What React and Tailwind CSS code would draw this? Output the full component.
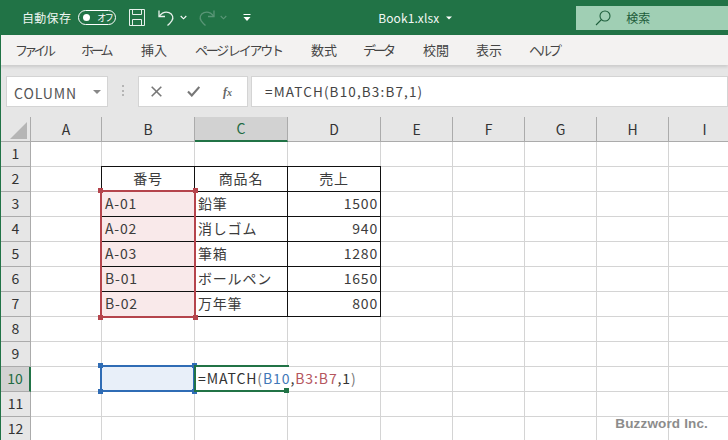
import React from "react";

const font = { fontFamily: '"Noto Sans CJK JP","Noto Sans",sans-serif' };
const cols = ["A", "B", "C", "D", "E", "F", "G", "H", "I"];
const rows = [1, 2, 3, 4, 5, 6, 7, 8, 9, 10, 11, 12];
const tabs = [
  ["ファイル", "w-[66px] tracking-[-3.7px]"],
  ["ホーム", "w-[60px] tracking-[-3px]"],
  ["挿入", "w-[54px]"],
  ["ページ レイアウト", "w-[116px] tracking-[-2.2px]"],
  ["数式", "w-[52px]"],
  ["データ", "w-[60px] tracking-[-3px]"],
  ["校閲", "w-[53px]"],
  ["表示", "w-[53px]"],
  ["ヘルプ", "w-[60px] tracking-[-3px]"],
];
const data = {
  "B2": ["番号", "c"], "C2": ["商品名", "c"], "D2": ["売上", "c"],
  "B3": ["A-01", "l"], "C3": ["鉛筆", "l"], "D3": ["1500", "r"],
  "B4": ["A-02", "l"], "C4": ["消しゴム", "l"], "D4": ["940", "r"],
  "B5": ["A-03", "l"], "C5": ["筆箱", "l"], "D5": ["1280", "r"],
  "B6": ["B-01", "l"], "C6": ["ボールペン", "l"], "D6": ["1650", "r"],
  "B7": ["B-02", "l"], "C7": ["万年筆", "l"], "D7": ["800", "r"],
};
const align = { c: "justify-center", l: "justify-start pl-[3px]", r: "justify-end pr-[2px]" };

function Handle({ className }) {
  return <span className={`absolute h-[5px] w-[5px] ${className}`} />;
}

function Cell({ col, row }) {
  const key = col + row;
  const d = data[key];
  const inTable = d !== undefined;
  const isRange = col === "B" && row >= 3 && row <= 7;
  const isActive = col === "B" && row === 10;
  return (
    <div
      className={`flex items-center overflow-visible whitespace-nowrap border-b border-r pb-[2px] text-[14px] tracking-[0.8px] text-[#3c3c3c] ${
        inTable ? "border-[#111111]" : "border-[#d4d4d4]"
      } ${isRange ? "bg-[#f9e9ea]" : isActive ? "bg-[#e8eff9]" : "bg-white"} ${inTable ? align[d[1]] : ""}`}
    >
      {inTable ? d[0] : null}
    </div>
  );
}

export default function App() {
  return (
    <div style={font} className="relative flex h-[440px] w-[728px] flex-col overflow-hidden bg-[#e6e6e6]">
      {/* title bar */}
      <div className="flex h-[35px] shrink-0 items-center bg-[#217346] text-white">
        <span className="ml-[22px] text-[12px] tracking-[0.3px] text-[#eef5f1]">自動保存</span>
        <div className="ml-[7px] flex h-[15px] w-[38px] items-center rounded-full border border-white pl-[4px]">
          <span className="h-[7px] w-[7px] shrink-0 rounded-full bg-white" />
          <span className="ml-[7px] whitespace-nowrap text-[9px] leading-none tracking-[-1.5px]">オフ</span>
        </div>
        <svg className="ml-[13px]" width="16" height="17" viewBox="0 0 16 17" fill="none" stroke="#e8f1ec" strokeWidth="1">
          <path d="M.5.5h15v16H.5z" />
          <path d="M3.5.5v5h9v-5M3.5 16.5v-6h9v6" />
        </svg>
        <svg className="ml-[13px]" width="17" height="17" viewBox="0 0 17 17" fill="none" stroke="#e8f1ec" strokeWidth="1.3">
          <path d="M1 1.5v6h6" />
          <path d="M1.2 7.3C4 3.6 8 2.6 11 3.6c3.6 1.3 5 5.3 2.8 8.2-1 1.4-2.4 3-4.3 4.7" />
        </svg>
        <svg className="ml-[5px]" width="7" height="5" viewBox="0 0 7 5" fill="none" stroke="#ffffff" strokeWidth="1.1">
          <path d="M.7 1 3.5 3.8 6.3 1" />
        </svg>
        <svg className="ml-[11px]" width="17" height="17" viewBox="0 0 17 17" fill="none" stroke="#5a9677" strokeWidth="1.3">
          <path d="M16 1.5v6h-6" />
          <path d="M15.8 7.3C13 3.6 9 2.6 6 3.6c-3.6 1.3-5 5.3-2.8 8.2 1 1.4 2.4 3 4.3 4.7" />
        </svg>
        <svg className="ml-[5px]" width="7" height="5" viewBox="0 0 7 5" fill="none" stroke="#5a9677" strokeWidth="1.1">
          <path d="M.7 1 3.5 3.8 6.3 1" />
        </svg>
        <svg className="ml-[16px]" width="8" height="8" viewBox="0 0 8 8" fill="#ffffff">
          <path d="M.5 0h7v1h-7zM.5 3h7L4 7z" />
        </svg>
        <span className="ml-[127px] text-[12px] tracking-[0.1px] text-[#f2f7f4]">Book1.xlsx</span>
        <svg className="ml-[7px]" width="6" height="4" viewBox="0 0 6 4" fill="#ffffff">
          <path d="M0 .5h6L3 3.5z" />
        </svg>
        <div className="ml-[124px] mt-[1px] flex h-[24px] flex-1 items-center bg-[#a0cfb4] text-[#1d5c3a]">
          <svg className="ml-[19px]" width="16" height="16" viewBox="0 0 16 16" fill="none" stroke="#1f5f3d" strokeWidth="1.1">
            <circle cx="10" cy="6" r="5" />
            <path d="M6.5 9.5 1 15" />
          </svg>
          <span className="ml-[15px] text-[12px]">検索</span>
        </div>
      </div>

      {/* ribbon tabs */}
      <div className="flex h-[30px] shrink-0 items-center border-l border-[#217346] bg-[#f3f2f1] pb-[1px] pl-[14px] text-[13px] text-[#444444] shadow-[0_2px_3px_rgba(0,0,0,0.12)]">
        {tabs.map(([t, c]) => (
          <span key={t} className={`shrink-0 whitespace-nowrap ${c}`}>{t}</span>
        ))}
      </div>

      {/* formula bar */}
      <div className="flex h-[52px] shrink-0 items-start border-l border-[#217346] pt-[11px]">
        <div className="ml-[5px] flex h-[31px] w-[102px] items-center justify-between border border-[#d4d4d4] bg-white pl-[7px] pr-[6px] pt-[3px] text-[14px] tracking-[0.9px] text-[#555555]">
          <span>COLUMN</span>
          <svg className="mb-[3px]" width="8" height="4" viewBox="0 0 8 4" fill="#888888"><path d="M0 0h8L4 4z" /></svg>
        </div>
        <div className="ml-[14px] mt-[9px] flex h-[11px] w-[2px] flex-col justify-between">
          <span className="h-[2px] w-[2px] bg-[#b5b5b5]" />
          <span className="h-[2px] w-[2px] bg-[#b5b5b5]" />
          <span className="h-[2px] w-[2px] bg-[#b5b5b5]" />
        </div>
        <div className="ml-[14px] flex h-[31px] w-[110px] items-center border border-[#d4d4d4] bg-white">
          <svg className="ml-[12px]" width="11" height="11" viewBox="0 0 11 11" fill="none" stroke="#777777" strokeWidth="1.6">
            <path d="M.7.7l9.6 9.6M10.3.7.7 10.3" />
          </svg>
          <svg className="ml-[25px]" width="13" height="11" viewBox="0 0 13 11" fill="none" stroke="#777777" strokeWidth="2.1">
            <path d="M1 5.5 4.8 9.5 12.3 1" />
          </svg>
          <span className="ml-[23px] text-[12px] italic leading-none text-[#666666]" style={{ fontFamily: '"Liberation Serif",serif' }}>
            <b>f</b><span className="text-[10px]"><b>x</b></span>
          </span>
        </div>
        <div className="ml-[3px] flex h-[31px] flex-1 items-center border border-[#d4d4d4] bg-white pl-[13px] pb-[1px] text-[13.5px] tracking-[1.15px] text-[#444444]">
          =MATCH(B10,B3:B7,1)
        </div>
      </div>

      {/* sheet */}
      <div className="relative grid flex-1 border-l border-[#217346] grid-cols-[30px_71px_93px_93px_93px_72px_72px_72px_72px_72px] grid-rows-[25px_repeat(12,25px)]">
        {/* corner */}
        <div className="relative border-b border-r border-[#ababab] bg-[#e6e6e6]">
          <svg className="absolute bottom-[2px] right-[3px]" width="17" height="17" viewBox="0 0 17 17" fill="#b5b5b5"><path d="M17 0v17H0z" /></svg>
        </div>
        {cols.map((c) => (
          <div
            key={c}
            className={`flex items-center justify-center text-[14px] ${
              c === "C"
                ? "border-b-2 border-r border-b-[#217346] border-r-[#ababab] bg-[#d2d2d2] text-[#1e6b43]"
                : "border-b border-r border-[#ababab] text-[#333333]"
            }`}
          >
            {c}
          </div>
        ))}
        {rows.map((r) => (
          <React.Fragment key={r}>
            <div
              className={`flex items-center justify-center pb-[1px] text-[14px] ${
                r === 10
                  ? "border-r-2 border-b border-r-[#217346] border-b-[#ababab] bg-[#d2d2d2] text-[#1e6b43]"
                  : "border-b border-r border-[#ababab] text-[#333333]"
              }`}
            >
              {r}
            </div>
            {cols.map((c) => (
              <Cell key={c} col={c} row={r} />
            ))}
          </React.Fragment>
        ))}

        {/* table top / left borders */}
        <div className="absolute left-[100px] top-[49px] h-[26px] w-[280px] border-l border-t border-[#111111]" />

        {/* red range highlight */}
        <div className="absolute left-[99px] top-[73px] h-[128px] w-[96px] border-2 border-[#b5444c]">
          <Handle className="left-[-4px] top-[-4px] bg-[#b5444c]" />
          <Handle className="right-[-4px] top-[-4px] bg-[#b5444c]" />
          <Handle className="bottom-[-4px] left-[-4px] bg-[#b5444c]" />
          <Handle className="bottom-[-4px] right-[-4px] bg-[#b5444c]" />
        </div>

        {/* blue reference */}
        <div className="absolute left-[99px] top-[248px] h-[27px] w-[95px] border-2 border-[#2f6cb5]">
          <Handle className="left-[-4px] top-[-4px] bg-[#2f6cb5]" />
          <Handle className="right-[-4px] top-[-4px] bg-[#2f6cb5]" />
          <Handle className="bottom-[-4px] left-[-4px] bg-[#2f6cb5]" />
          <Handle className="bottom-[-4px] right-[-4px] bg-[#2f6cb5]" />
        </div>

        {/* active editing cell */}
        <div className="absolute left-[193px] top-[248px] flex h-[27px] w-[95px] items-center border-2 border-r-0 border-[#217346] bg-white pl-[2px] text-[14px] tracking-[0.9px] text-[#333333]">
          <span className="whitespace-nowrap bg-white pr-[2px]">
            =MATCH<span className="text-[#777777]">(</span><span className="text-[#3f78b8]">B10</span>,<span className="text-[#b5555d]">B3:B7</span>,1<span className="text-[#777777]">)</span>
          </span>
          <span className="absolute bottom-[-3px] right-[0px] h-[5px] w-[5px] bg-[#217346]" />
        </div>

        {/* watermark */}
        <span className="absolute bottom-[8px] right-[20px] text-[13.5px] font-bold tracking-[0.15px] text-[#8c8c8c]" style={{ fontFamily: '"Liberation Sans",sans-serif' }}>
          Buzzword Inc.
        </span>
      </div>
    </div>
  );
}
